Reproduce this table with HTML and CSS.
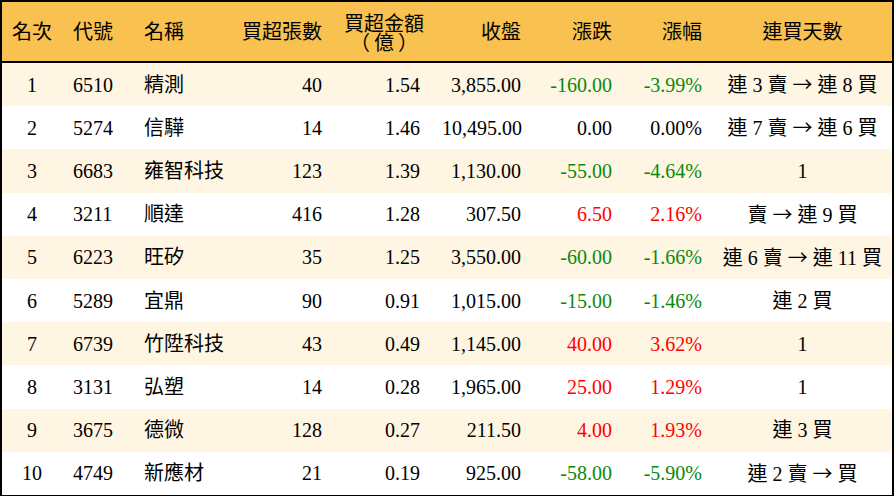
FILE: index.html
```html
<!DOCTYPE html>
<html lang="zh-Hant">
<head>
<meta charset="utf-8">
<title>買超排行</title>
<link rel="stylesheet" href="styles.css">
</head>
<body>
<table class="rank">
  <colgroup>
    <col class="c-rank"><col class="c-code"><col class="c-name"><col class="c-vol"><col class="c-amt"><col class="c-close"><col class="c-chg"><col class="c-pct"><col class="c-days">
  </colgroup>
  <thead>
    <tr>
      <th class="center">名次</th>
      <th class="left">代號</th>
      <th class="left">名稱</th>
      <th class="right">買超張數</th>
      <th class="right"><span class="two"><span class="line">買超金額</span><span class="line paren">（億）</span></span></th>
      <th class="right">收盤</th>
      <th class="right">漲跌</th>
      <th class="right">漲幅</th>
      <th class="center">連買天數</th>
    </tr>
  </thead>
  <tbody>
    <tr><td class="center">1</td><td class="left">6510</td><td class="left">精測</td><td class="right">40</td><td class="right">1.54</td><td class="right">3,855.00</td><td class="right down">-160.00</td><td class="right down">-3.99%</td><td class="center">連 3 賣 <span class="arrow">→</span> 連 8 買</td></tr>
    <tr><td class="center">2</td><td class="left">5274</td><td class="left">信驊</td><td class="right">14</td><td class="right">1.46</td><td class="right">10,495.00</td><td class="right">0.00</td><td class="right">0.00%</td><td class="center">連 7 賣 <span class="arrow">→</span> 連 6 買</td></tr>
    <tr><td class="center">3</td><td class="left">6683</td><td class="left">雍智科技</td><td class="right">123</td><td class="right">1.39</td><td class="right">1,130.00</td><td class="right down">-55.00</td><td class="right down">-4.64%</td><td class="center">1</td></tr>
    <tr><td class="center">4</td><td class="left">3211</td><td class="left">順達</td><td class="right">416</td><td class="right">1.28</td><td class="right">307.50</td><td class="right up">6.50</td><td class="right up">2.16%</td><td class="center">賣 <span class="arrow">→</span> 連 9 買</td></tr>
    <tr><td class="center">5</td><td class="left">6223</td><td class="left">旺矽</td><td class="right">35</td><td class="right">1.25</td><td class="right">3,550.00</td><td class="right down">-60.00</td><td class="right down">-1.66%</td><td class="center">連 6 賣 <span class="arrow">→</span> 連 11 買</td></tr>
    <tr><td class="center">6</td><td class="left">5289</td><td class="left">宜鼎</td><td class="right">90</td><td class="right">0.91</td><td class="right">1,015.00</td><td class="right down">-15.00</td><td class="right down">-1.46%</td><td class="center">連 2 買</td></tr>
    <tr><td class="center">7</td><td class="left">6739</td><td class="left">竹陞科技</td><td class="right">43</td><td class="right">0.49</td><td class="right">1,145.00</td><td class="right up">40.00</td><td class="right up">3.62%</td><td class="center">1</td></tr>
    <tr><td class="center">8</td><td class="left">3131</td><td class="left">弘塑</td><td class="right">14</td><td class="right">0.28</td><td class="right">1,965.00</td><td class="right up">25.00</td><td class="right up">1.29%</td><td class="center">1</td></tr>
    <tr><td class="center">9</td><td class="left">3675</td><td class="left">德微</td><td class="right">128</td><td class="right">0.27</td><td class="right">211.50</td><td class="right up">4.00</td><td class="right up">1.93%</td><td class="center">連 3 買</td></tr>
    <tr><td class="center">10</td><td class="left">4749</td><td class="left">新應材</td><td class="right">21</td><td class="right">0.19</td><td class="right">925.00</td><td class="right down">-58.00</td><td class="right down">-5.90%</td><td class="center">連 2 賣 <span class="arrow">→</span> 買</td></tr>
  </tbody>
</table>
</body>
</html>
```

FILE: styles.css
```css
html, body {
  margin: 0;
  padding: 0;
  background: #ffffff;
}

.rank {
  width: 894px;
  border-collapse: separate;
  border-spacing: 0;
  table-layout: fixed;
  border: 2px solid #000000;
  font-family: "Liberation Serif", "Noto Sans CJK TC", serif;
  font-size: 20px;
  color: #000000;
}

.c-rank { width: 60px; }
.c-code { width: 71px; }
.c-name { width: 97px; }
.c-vol { width: 103px; }
.c-amt { width: 98px; }
.c-close { width: 101px; }
.c-chg { width: 91px; }
.c-pct { width: 90px; }
.c-days { width: 179px; }

.rank thead tr {
  background: #f9c14f;
}

.rank th {
  height: 61px;
  box-sizing: border-box;
  border-bottom: 2px solid #000000;
  font-weight: normal;
  padding: 0 11px;
  vertical-align: middle;
  line-height: 22px;
  white-space: nowrap;
}

.rank th .two {
  display: inline-flex;
  flex-direction: column;
  align-items: center;
  padding-top: 1px;
  font-family: "Noto Sans CJK TC", sans-serif;
}

.rank th .two .line {
  display: block;
  height: 19px;
  line-height: 19px;
}

.rank th .two .paren {
  letter-spacing: 4px;
  padding-left: 4px;
}

.rank tbody tr:nth-child(odd) {
  background: #fef5e2;
}

.rank td {
  height: 43.2px;
  box-sizing: border-box;
  padding: 0 11px;
  vertical-align: middle;
  white-space: nowrap;
  line-height: 22px;
}

.arrow {
  font-family: "Noto Sans CJK TC", sans-serif;
}

.center { text-align: center; }
.left { text-align: left; }
.right { text-align: right; }

.rank td.center { padding: 0; }
.rank th.center { padding: 0; }

.down { color: #0a8a0a; }
.up { color: #ff0000; }
```
